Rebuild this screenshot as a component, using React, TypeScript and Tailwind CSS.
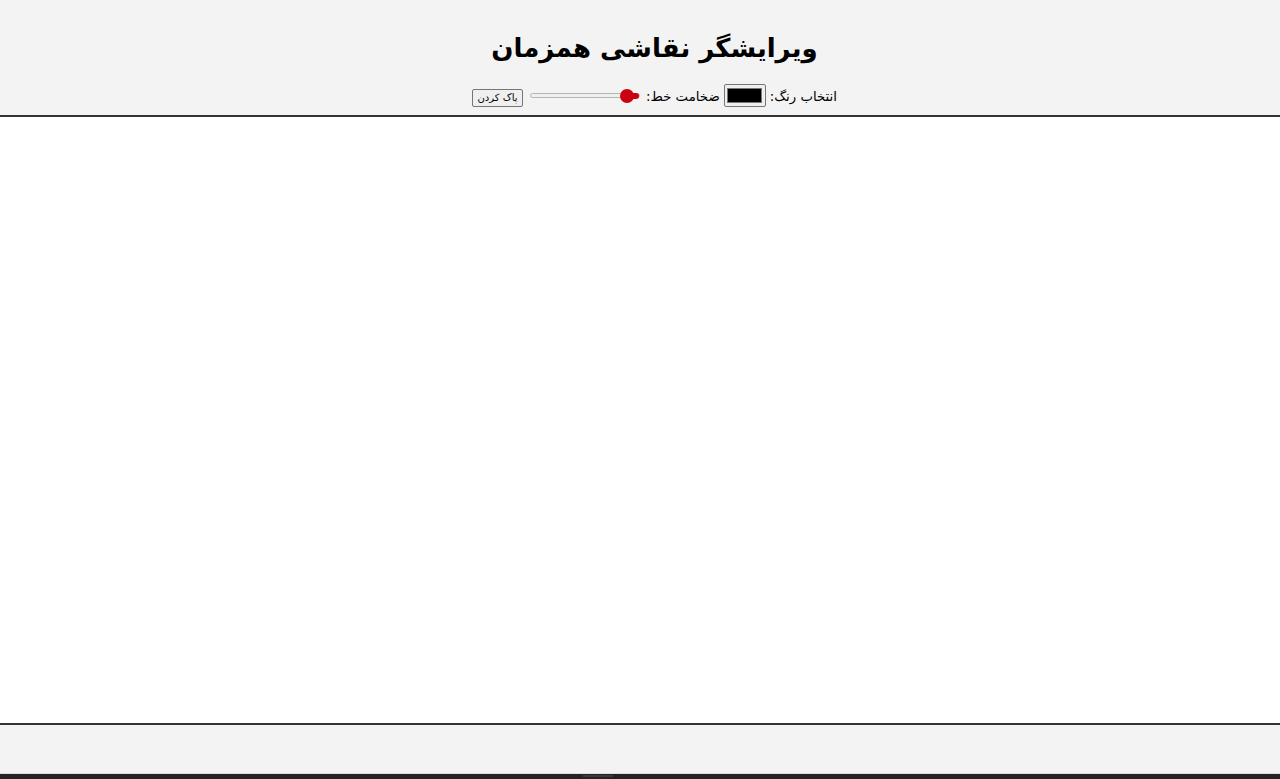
import React from "react";

export default function App() {
  return (
    <div
      dir="rtl"
      className="w-[1280px] h-[779px] overflow-hidden flex flex-col bg-white text-black"
      style={{ fontFamily: '"DejaVu Sans", "Noto Sans", sans-serif' }}
    >
      <header className="h-[117px] shrink-0 bg-[#f3f3f3] border-b-2 border-[#333333] flex flex-col items-center pl-[29px]">
        <h1 className="mt-[30px] h-[36px] text-[26px] leading-[36px] font-bold">ویرایشگر نقاشی همزمان</h1>
        <div className="mt-[18px] flex items-center text-[13.3px] leading-[18px]">
          <span className="mt-[2px]">انتخاب رنگ:</span>
          <div className="mr-[4px] w-[42px] h-[23px] border border-[#767676] bg-[#efefef] rounded-[2px] flex items-center justify-center">
            <div className="w-[35px] h-[15px] bg-black border border-[#777777]" />
          </div>
          <span className="mr-[4px] mt-[2px]">ضخامت خط:</span>
          <div className="mr-[6px] w-[110px] h-[16px] relative flex items-center">
            <div className="w-full h-[5px] rounded-full bg-[#efefef] border border-[#b5b5b5]" />
            <div className="absolute right-[1px] top-[5px] w-[14px] h-[6px] rounded-full bg-[#cc0011]" />
            <div className="absolute right-[6px] top-[1px] w-[14px] h-[14px] rounded-full bg-[#cc0011]" />
          </div>
          <button className="mr-[7px] mt-[4px] w-[51px] h-[18px] border border-[#767676] bg-[#efefef] rounded-[2px] text-[10px] leading-[14px] text-black">
            پاک کردن
          </button>
        </div>
      </header>
      <main className="h-[606px] shrink-0 bg-white" />
      <footer className="h-[51px] shrink-0 bg-[#f3f3f3] border-t-2 border-[#333333] border-b border-b-[#dddddd]" />
      <div dir="ltr" className="flex-1 bg-[#232323] flex pl-[583px]">
        <div className="w-[30px] h-[2px] mt-[1px] bg-[#3a3a3a]" />
      </div>
    </div>
  );
}
